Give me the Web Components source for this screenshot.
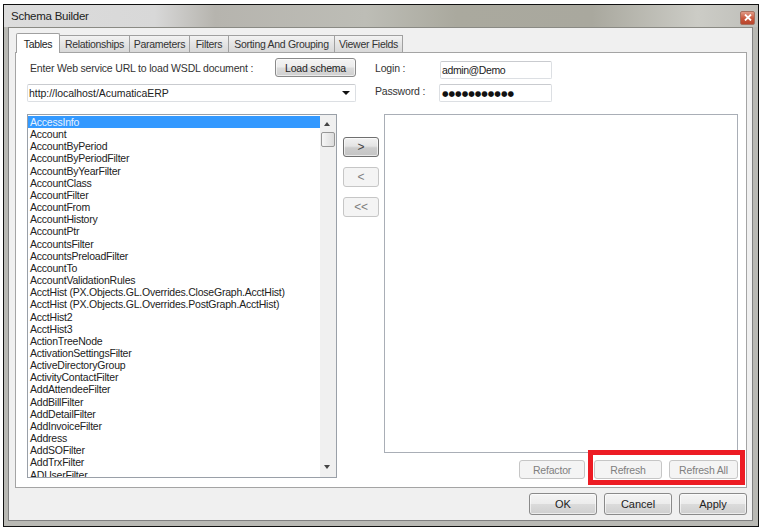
<!DOCTYPE html>
<html>
<head>
<meta charset="utf-8">
<style>
  html, body { margin: 0; padding: 0; background: #fff; }
  body { font: 10.5px "Liberation Sans", sans-serif; color: #222; width: 762px; height: 530px; overflow: hidden; }
</style>
</head>
<body>
<sb-window caption="Schema Builder">
  <sb-tabs></sb-tabs>
  <sb-panel></sb-panel>
  <sb-footer></sb-footer>
</sb-window>

<script>
const buttonTemplate = document.createElement("template");
buttonTemplate.innerHTML = `
<style>
  :host { display: block; box-sizing: border-box; height: 19px; }
  .btn {
    box-sizing: border-box;
    height: 100%;
    display: flex;
    align-items: center;
    justify-content: center;
    border: 1px solid #8a8a8a;
    border-radius: 3px;
    background: linear-gradient(#f4f4f4 0%, #ececec 48%, #dbdbdb 52%, #cfcfcf 100%);
    box-shadow: inset 0 0 0 1px rgba(255,255,255,0.6);
    color: #222;
    white-space: nowrap;
  }
  :host([disabled]) .btn {
    border-color: #c6c6c6;
    background: #f4f4f4;
    box-shadow: none;
    color: #7f7f7f;
  }
  :host([dark]) .btn {
    border-color: #6f6f6f;
    background: linear-gradient(#f2f2f2 0%, #e4e4e4 45%, #cccccc 55%, #c4c4c4 100%);
    color: #444;
  }
</style>
<div class="btn"><slot></slot></div>
`;

class SbButton extends HTMLElement {
  constructor() {
    super();
    this.attachShadow({ mode: "open" });
    this.shadowRoot.appendChild(buttonTemplate.content.cloneNode(true));
  }
}
customElements.define("sb-button", SbButton);

const fieldTemplate = document.createElement("template");
fieldTemplate.innerHTML = `
<style>
  :host { display: block; box-sizing: border-box; height: 18px; }
  .box {
    box-sizing: border-box;
    height: 100%;
    display: flex;
    align-items: center;
    justify-content: space-between;
    padding: 0 5px 0 1px;
    background: #fff;
    border: 1px solid #dcdfe3;
    border-top-color: #c9cbcf;
    border-radius: 2px;
    color: #222;
  }
  .arrow { width: 0; height: 0; border: 4px solid transparent; border-top: 4px solid #111; border-bottom: 0; }
  .dots { font-size: 7.5px; letter-spacing: 0; color: #111; font-family: "DejaVu Sans", sans-serif; padding-left: 1px; }
</style>
<div class="box"><span id="text"><slot></slot></span></div>
`;

class SbField extends HTMLElement {
  constructor() {
    super();
    this.attachShadow({ mode: "open" });
    this.shadowRoot.appendChild(fieldTemplate.content.cloneNode(true));
    if (this.hasAttribute("password")) {
      this.shadowRoot.getElementById("text").className = "dots";
    }
    if (this.hasAttribute("combo")) {
      const arrow = document.createElement("span");
      arrow.className = "arrow";
      this.shadowRoot.querySelector(".box").appendChild(arrow);
    }
  }
}
customElements.define("sb-field", SbField);

const tabsTemplate = document.createElement("template");
tabsTemplate.innerHTML = `
<style>
  :host { display: flex; align-items: flex-end; height: 19px; margin: 5px 0 0 7px; position: relative; z-index: 1; font-size: 10.5px; letter-spacing: -0.3px; }
  .tab {
    box-sizing: border-box;
    height: 17px;
    display: flex;
    align-items: center;
    justify-content: center;
    border: 1px solid #a0a0a0;
    border-left: 0;
    border-bottom: 0;
    background: linear-gradient(#f3f3f3, #e4e4e4 50%, #d8d8d8);
    color: #333;
    white-space: nowrap;
  }
  .active {
    height: 20px;
    margin-bottom: -1px;
    border-left: 1px solid #a0a0a0;
    background: #fff;
    border-radius: 2px 2px 0 0;
    color: #222;
  }
</style>
`;

const tabs = [["Tables", 44], ["Relationships", 70], ["Parameters", 60], ["Filters", 39], ["Sorting And Grouping", 106], ["Viewer Fields", 68]];

class SbTabs extends HTMLElement {
  constructor() {
    super();
    this.attachShadow({ mode: "open" });
    this.shadowRoot.appendChild(tabsTemplate.content.cloneNode(true));
    tabs.forEach(([label, width], i) => {
      const tab = document.createElement("div");
      tab.className = i == 0 ? "tab active" : "tab";
      tab.style.width = width + "px";
      tab.textContent = label;
      this.shadowRoot.appendChild(tab);
    });
  }
}
customElements.define("sb-tabs", SbTabs);

const listTemplate = document.createElement("template");
listTemplate.innerHTML = `
<style>
  :host { display: flex; box-sizing: border-box; width: 310px; height: 364px; border: 1px solid #9aa0a8; background: #fff; overflow: hidden; font-size: 10.5px; letter-spacing: -0.22px; }
  .items { flex: 1; padding-top: 1px; overflow: hidden; }
  .item { height: 12.17px; line-height: 12px; padding-left: 2px; white-space: nowrap; color: #222; }
  .selected { background: #3399ff; color: #e8f2ff; }
  .bar { width: 16px; background: #f0f0f0; position: relative; overflow: hidden; }
  .up, .down { width: 0; height: 0; border: 3.5px solid transparent; position: absolute; left: 4px; }
  .up { top: 7px; border-top: 0; border-bottom: 4px solid #444; }
  .down { bottom: 8px; border-bottom: 0; border-top: 4px solid #444; }
  .thumb { box-sizing: border-box; width: 14px; height: 15px; margin: 17px 0 0 1px; border: 1px solid #979797; border-radius: 2px; background: linear-gradient(90deg, #f6f6f6, #dcdcdc); }
</style>
<div class="items"></div>
<div class="bar"><span class="up"></span><div class="thumb"></div><span class="down"></span></div>
`;

const tableNames = [
  "AccessInfo", "Account", "AccountByPeriod", "AccountByPeriodFilter", "AccountByYearFilter",
  "AccountClass", "AccountFilter", "AccountFrom", "AccountHistory", "AccountPtr",
  "AccountsFilter", "AccountsPreloadFilter", "AccountTo", "AccountValidationRules",
  "AcctHist (PX.Objects.GL.Overrides.CloseGraph.AcctHist)",
  "AcctHist (PX.Objects.GL.Overrides.PostGraph.AcctHist)",
  "AcctHist2", "AcctHist3", "ActionTreeNode", "ActivationSettingsFilter",
  "ActiveDirectoryGroup", "ActivityContactFilter", "AddAttendeeFilter", "AddBillFilter",
  "AddDetailFilter", "AddInvoiceFilter", "Address", "AddSOFilter", "AddTrxFilter", "ADUserFilter"
];

class SbList extends HTMLElement {
  constructor() {
    super();
    this.attachShadow({ mode: "open" });
    this.shadowRoot.appendChild(listTemplate.content.cloneNode(true));
    const holder = this.shadowRoot.querySelector(".items");
    tableNames.forEach((name, i) => {
      const row = document.createElement("div");
      row.className = i == 0 ? "item selected" : "item";
      row.textContent = name;
      holder.appendChild(row);
    });
  }
}
customElements.define("sb-list", SbList);

const panelTemplate = document.createElement("template");
panelTemplate.innerHTML = `
<style>
  :host {
    display: grid;
    box-sizing: border-box;
    grid-template-columns: 329px 1fr;
    grid-template-rows: 50px 1fr;
    width: 732px;
    height: 436px;
    margin-left: 6px;
    padding: 5px 8px 9px 11px;
    background: #fff;
    border: 1px solid #a4a4a4;
    font-size: 10.5px;
    letter-spacing: -0.18px;
    color: #333;
  }
  .url { display: flex; flex-direction: column; gap: 7px; }
  .url-top { display: flex; align-items: center; justify-content: space-between; padding-left: 3px; }
  .url-top span { margin-top: 1px; }
  .login { display: grid; grid-template-columns: 64px 113px; grid-auto-rows: 18px; row-gap: 5px; margin: 3px 0 0 19px; align-items: center; }
  .login span { margin-top: -5px; }
  .lists { grid-column: 1 / 3; display: flex; margin-top: 6px; }
  .movers { display: flex; flex-direction: column; gap: 10px; margin: 23px 5px 0 6px; width: 36px; font-size: 12px; }
  .movers sb-button { height: 20px; }
  .right { flex: 1; display: flex; flex-direction: column; }
  .right-box { box-sizing: border-box; height: 339px; border: 1px solid #a9aeb6; background: #fff; }
  .actions { display: flex; justify-content: flex-end; gap: 9px; margin-top: 7px; }
  .refresh { display: flex; gap: 7px; position: relative; }
  .refresh::after {
    content: "";
    position: absolute;
    left: -6px; right: -7px; top: -10px; bottom: -6px;
    border: 5px solid #ed1c24;
  }
</style>
<div class="url">
  <div class="url-top">
    <span>Enter Web service URL to load WSDL document :</span>
    <sb-button style="width: 81px">Load schema</sb-button>
  </div>
  <sb-field combo style="letter-spacing: -0.05px">http://localhost/AcumaticaERP</sb-field>
</div>
<div class="login">
  <span>Login :</span><sb-field style="letter-spacing: -0.4px; padding-left: 1px">admin@Demo</sb-field>
  <span>Password :</span><sb-field password>●●●●●●●●●●●</sb-field>
</div>
<div class="lists">
  <sb-list></sb-list>
  <div class="movers">
    <sb-button dark>&gt;</sb-button>
    <sb-button disabled>&lt;</sb-button>
    <sb-button disabled>&lt;&lt;</sb-button>
  </div>
  <div class="right">
    <div class="right-box"></div>
    <div class="actions">
      <sb-button disabled style="width: 66px">Refactor</sb-button>
      <div class="refresh">
        <sb-button disabled style="width: 68px">Refresh</sb-button>
        <sb-button disabled style="width: 69px">Refresh All</sb-button>
      </div>
    </div>
  </div>
</div>
`;

class SbPanel extends HTMLElement {
  constructor() {
    super();
    this.attachShadow({ mode: "open" });
    this.shadowRoot.appendChild(panelTemplate.content.cloneNode(true));
  }
}
customElements.define("sb-panel", SbPanel);

const footerTemplate = document.createElement("template");
footerTemplate.innerHTML = `
<style>
  :host { display: flex; justify-content: flex-end; gap: 7px; padding: 5px 5px 0 0; font-size: 11px; }
  sb-button { width: 68px; height: 22px; }
</style>
<sb-button>OK</sb-button>
<sb-button>Cancel</sb-button>
<sb-button>Apply</sb-button>
`;

class SbFooter extends HTMLElement {
  constructor() {
    super();
    this.attachShadow({ mode: "open" });
    this.shadowRoot.appendChild(footerTemplate.content.cloneNode(true));
  }
}
customElements.define("sb-footer", SbFooter);

const windowTemplate = document.createElement("template");
windowTemplate.innerHTML = `
<style>
  :host {
    display: flex;
    flex-direction: column;
    box-sizing: border-box;
    width: 756px;
    height: 523px;
    margin: 4px 0 0 3px;
    border: 1px solid #111;
    background: #b9b9b4;
  }
  .title {
    height: 22px;
    flex: none;
    display: flex;
    align-items: center;
    justify-content: space-between;
    padding: 0 3px 0 7px;
    font-size: 11.5px;
    letter-spacing: -0.25px;
    color: #222;
    background: linear-gradient(90deg, #dcdcdc 0%, #d8d8d8 20%, #b6b4ae 28%, #bdbdb6 48%, #aaa99e 60%, #a9a89e 78%, #ccccc6 92%, #bfbfba 100%);
  }
  .close {
    box-sizing: border-box;
    width: 15px;
    height: 14px;
    margin-top: 3px;
    display: flex;
    align-items: center;
    justify-content: center;
    border: 1px solid #a8705f;
    border-radius: 2px;
    background: linear-gradient(#e09a86, #c9573c 55%, #b8452c);
  }
  .body {
    flex: 1;
    margin: 0 5px 5px 4px;
    background: #f0f0f0;
    border: 1px solid #808080;
    border-top-color: #8a8a84;
    overflow: hidden;
  }
</style>
<div class="title">
  <span></span>
  <div class="close">
    <svg width="8" height="7" viewBox="0 0 8 7"><path d="M1 0.5 L7 6.5 M7 0.5 L1 6.5" stroke="#fff" stroke-width="1.8" fill="none"/></svg>
  </div>
</div>
<div class="body"><slot></slot></div>
`;

class SbWindow extends HTMLElement {
  constructor() {
    super();
    this.attachShadow({ mode: "open" });
    this.shadowRoot.appendChild(windowTemplate.content.cloneNode(true));
    this.shadowRoot.querySelector(".title span").textContent = this.getAttribute("caption");
  }
}
customElements.define("sb-window", SbWindow);
</script>
</body>
</html>
